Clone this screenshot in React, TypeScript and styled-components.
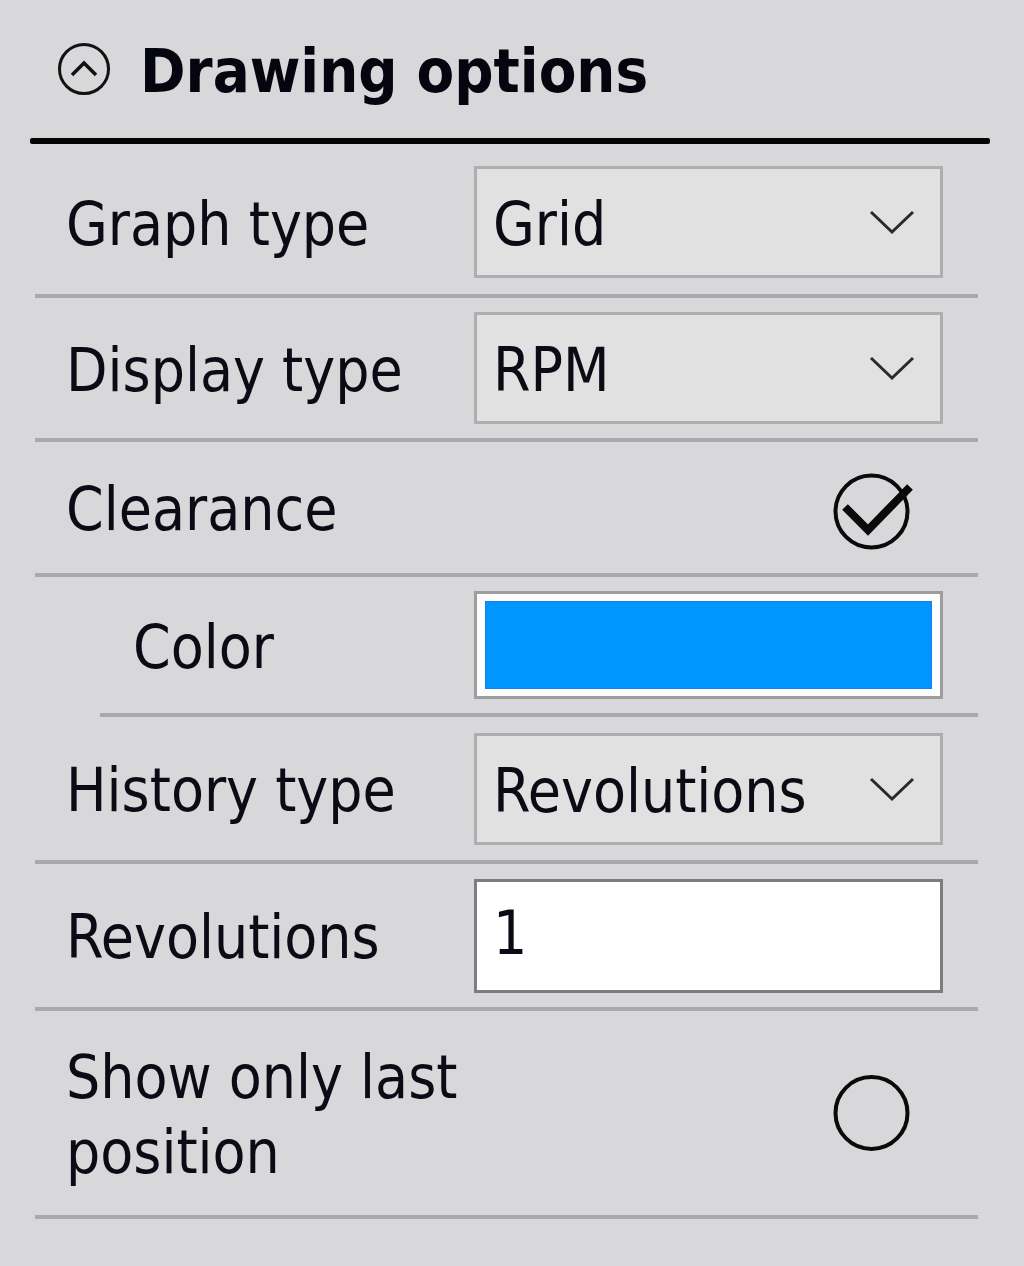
import React from "react"
import styled, { createGlobalStyle } from "styled-components"

const GlobalStyle = createGlobalStyle`
  body {
    margin: 0;
    background: #d8d7da;
    font-family: "DejaVu Sans Condensed", "Liberation Sans", Arial, sans-serif;
    color: #0b0b16;
  }
`

const Panel = styled.div`
  width: 1024px;
  min-height: 1266px;
  background: #d8d7da;
`

const Header = styled.div`
  display: flex;
  align-items: center;
  gap: 28px;
  height: 138px;
  padding-left: 56px;
`

const Title = styled.span`
  font-size: 61px;
  font-weight: bold;
  color: #05050f;
  line-height: 1;
  padding-top: 2px;
`

const Rule = styled.div`
  height: 6px;
  margin: 0 34px 0 30px;
  background: #050505;
  border-radius: 2px;
`

const Row = styled.div<{ $h: number; $top?: number; $indent?: boolean }>`
  display: grid;
  grid-template-columns: ${(p) => (p.$indent ? 374 : 439)}px 469px;
  align-items: center;
  height: ${(p) => p.$h - (p.$top || 0)}px;
  padding-top: ${(p) => p.$top || 0}px;
  margin-left: ${(p) => (p.$indent ? 100 : 35)}px;
  width: ${(p) => (p.$indent ? 878 : 943)}px;
  border-bottom: 4px solid #a9a8ab;
`

const Label = styled.div<{ $indent?: boolean }>`
  padding-left: ${(p) => (p.$indent ? 33 : 31)}px;
  padding-top: 4px;
  font-size: 60px;
  line-height: 75px;
`

const Select = styled.div`
  box-sizing: border-box;
  height: 112px;
  display: flex;
  align-items: center;
  justify-content: space-between;
  padding: 0 25px 0 16px;
  background: #e1e1e1;
  border: 3px solid #aeadb0;
  font-size: 60px;

  & > span {
    padding-top: 4px;
  }
`

const Swatch = styled.div<{ $color: string }>`
  box-sizing: border-box;
  height: 108px;
  padding: 7px 8px;
  background: #fdfdfd;
  border: 3px solid #9d9c9f;

  &::after {
    content: "";
    display: block;
    height: 100%;
    background: ${(p) => p.$color};
    border: 1px solid #1a7cf0;
    box-sizing: border-box;
  }
`

const TextInput = styled.div`
  box-sizing: border-box;
  height: 114px;
  display: flex;
  align-items: center;
  padding: 0 16px 6px;
  background: #ffffff;
  border: 3px solid #7d7c80;
  font-size: 60px;
`

const Toggle = styled.div`
  display: flex;
  justify-content: flex-end;
  padding-right: 21px;
`

const Chevron = () => (
  <svg width="46" height="26" viewBox="0 0 46 26">
    <path d="M2 3 L23 23 L44 3" fill="none" stroke="#2a2a2e" strokeWidth="3" />
  </svg>
)

const CollapseIcon = () => (
  <svg width="56" height="56" viewBox="0 0 56 56">
    <circle cx="28" cy="28" r="24.5" fill="none" stroke="#111" strokeWidth="3" />
    <path d="M16 34 L28 22 L40 34" fill="none" stroke="#111" strokeWidth="3.5" />
  </svg>
)

const CheckCircle = ({ checked }: { checked: boolean }) => (
  <svg width="90" height="90" viewBox="0 0 90 90">
    <circle
      cx="39.5"
      cy={checked ? 48.5 : 45}
      r="36"
      fill="none"
      stroke="#0a0a0a"
      strokeWidth="4"
    />
    {checked && (
      <path
        d="M13 44 L36 67 L78 24"
        fill="none"
        stroke="#0a0a0a"
        strokeWidth="8"
        strokeLinejoin="miter"
      />
    )}
  </svg>
)

const App = () => {
  return (
    <Panel>
      <GlobalStyle />
      <Header>
        <CollapseIcon />
        <Title>Drawing options</Title>
      </Header>
      <Rule />
      <Row $h={150} $top={6}>
        <Label>Graph type</Label>
        <Select>
          <span>Grid</span>
          <Chevron />
        </Select>
      </Row>
      <Row $h={140}>
        <Label>Display type</Label>
        <Select>
          <span>RPM</span>
          <Chevron />
        </Select>
      </Row>
      <Row $h={131}>
        <Label>Clearance</Label>
        <Toggle>
          <CheckCircle checked />
        </Toggle>
      </Row>
      <Row $h={136} $indent>
        <Label $indent>Color</Label>
        <Swatch $color="#0096ff" />
      </Row>
      <Row $h={143}>
        <Label>History type</Label>
        <Select>
          <span>Revolutions</span>
          <Chevron />
        </Select>
      </Row>
      <Row $h={143}>
        <Label>Revolutions</Label>
        <TextInput>1</TextInput>
      </Row>
      <Row $h={204}>
        <Label>
          Show only last
          <br />
          position
        </Label>
        <Toggle>
          <CheckCircle checked={false} />
        </Toggle>
      </Row>
    </Panel>
  )
}

export default App
